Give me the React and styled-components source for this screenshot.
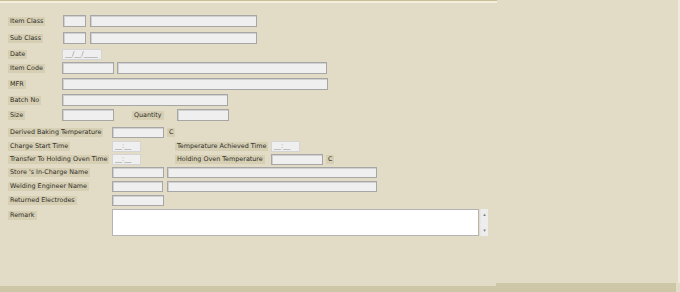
import React from "react";
import styled, { createGlobalStyle } from "styled-components";

const GlobalStyle = createGlobalStyle`
  html, body {
    margin: 0;
    padding: 0;
    background: #e2dcc6;
  }
  * {
    box-sizing: border-box;
  }
`;

const Page = styled.div`
  width: 680px;
  height: 292px;
  display: flex;
  flex-direction: column;
  background: #e2dcc6;
  font-family: "DejaVu Sans", sans-serif;
  font-size: 6.4px;
  color: #2f2d29;
  overflow: hidden;
`;

const Main = styled.div`
  flex: 1;
  display: flex;
`;

const Panel = styled.div`
  width: 497px;
  border-top: 1px solid #cabe98;
`;

const RightFill = styled.div`
  flex: 1;
  border-right: 2px solid #eeeadc;
`;

const Form = styled.div`
  display: flex;
  flex-direction: column;
  border-top: 2px solid #f4efdc;
  padding: 12px 0 0 8px;
`;

const Row = styled.div`
  display: flex;
  align-items: ${(p) => (p.$top ? "flex-start" : "center")};
  height: ${(p) => p.$h || 12}px;
  margin-top: ${(p) => p.$mt || 0}px;
`;

const LabelCell = styled.div`
  width: ${(p) => p.$w}px;
  flex-shrink: 0;
  display: flex;
  padding-top: ${(p) => p.$pt || 0}px;
`;

const Label = styled.span`
  display: inline-block;
  background: #d6cfb3;
  padding: 1px 2px;
  line-height: 7px;
  white-space: nowrap;
  margin-left: ${(p) => p.$ml || 0}px;
`;

const Field = styled.input`
  width: ${(p) => p.$w}px;
  height: ${(p) => p.$h || 12}px;
  margin-left: ${(p) => p.$ml || 0}px;
  padding: 0 2px;
  background: #efefef;
  border: 1px solid #a6a6a6;
  box-shadow: inset 1px 1px 0 #d0d0d0;
  outline: none;
  flex-shrink: 0;
`;

// masked date/time box, shown greyed out
const MaskField = styled.div`
  width: ${(p) => p.$w}px;
  height: 11px;
  flex-shrink: 0;
  padding: 0 2px;
  background: #efefef;
  border: 1px solid #d4d4d4;
  font-size: 7px;
  line-height: 8px;
  color: #959595;
  white-space: nowrap;
  overflow: hidden;
`;

const Unit = styled(Label)`
  margin-left: 3px;
`;

const RemarkBox = styled.div`
  display: flex;
`;

const TextArea = styled.textarea`
  width: 367px;
  height: 27px;
  background: #ffffff;
  border: 1px solid #b4b4b4;
  resize: none;
  overflow: hidden;
  padding: 2px;
  outline: none;
`;

const ScrollBar = styled.div`
  width: 8px;
  height: 27px;
  margin-left: 1px;
  background: #ededed;
  border-left: 1px dotted #e0e0e0;
  display: flex;
  flex-direction: column;
  justify-content: space-between;
  align-items: center;
  padding: 3px 0;
  font-size: 5px;
  line-height: 5px;
  color: #808080;
`;

const Footer = styled.div`
  height: 9px;
  display: flex;
  align-items: flex-end;
`;

const FooterBar = styled.div`
  width: ${(p) => p.$w}px;
  height: ${(p) => p.$h}px;
  background: #cdc6a7;
`;

export default function App() {
  return (
    <>
      <GlobalStyle />
      <Page>
        <Main>
          <Panel>
            <Form>
              <Row>
                <LabelCell $w={55}><Label>Item Class</Label></LabelCell>
                <Field $w={23} readOnly />
                <Field $w={167} $ml={4} readOnly />
              </Row>
              <Row $mt={5}>
                <LabelCell $w={55}><Label>Sub Class</Label></LabelCell>
                <Field $w={23} readOnly />
                <Field $w={167} $ml={4} readOnly />
              </Row>
              <Row $mt={5} $h={11}>
                <LabelCell $w={54}><Label>Date</Label></LabelCell>
                <MaskField $w={40}>__/__/____</MaskField>
              </Row>
              <Row $mt={2}>
                <LabelCell $w={54}><Label>Item Code</Label></LabelCell>
                <Field $w={52} readOnly />
                <Field $w={210} $ml={3} readOnly />
              </Row>
              <Row $mt={4}>
                <LabelCell $w={54}><Label>MFR</Label></LabelCell>
                <Field $w={266} readOnly />
              </Row>
              <Row $mt={4}>
                <LabelCell $w={54}><Label>Batch No</Label></LabelCell>
                <Field $w={166} readOnly />
              </Row>
              <Row $mt={3}>
                <LabelCell $w={54}><Label>Size</Label></LabelCell>
                <Field $w={52} readOnly />
                <LabelCell $w={63}><Label $ml={18}>Quantity</Label></LabelCell>
                <Field $w={52} readOnly />
              </Row>
              <Row $mt={6} $h={11}>
                <LabelCell $w={104}><Label>Derived Baking Temperature</Label></LabelCell>
                <Field $w={52} $h={11} readOnly />
                <Unit>C</Unit>
              </Row>
              <Row $mt={3} $h={11}>
                <LabelCell $w={104}><Label>Charge Start Time</Label></LabelCell>
                <MaskField $w={29}>__:__</MaskField>
                <LabelCell $w={130}><Label $ml={34}>Temperature Achieved Time</Label></LabelCell>
                <MaskField $w={29}>__:__</MaskField>
              </Row>
              <Row $mt={2} $h={11}>
                <LabelCell $w={104}><Label>Transfer To Holding Oven Time</Label></LabelCell>
                <MaskField $w={29}>__:__</MaskField>
                <LabelCell $w={130}><Label $ml={34}>Holding Oven Temperature</Label></LabelCell>
                <Field $w={52} $h={11} readOnly />
                <Unit>C</Unit>
              </Row>
              <Row $mt={2} $h={11}>
                <LabelCell $w={104}><Label>Store 's In-Charge Name</Label></LabelCell>
                <Field $w={52} $h={11} readOnly />
                <Field $w={210} $h={11} $ml={3} readOnly />
              </Row>
              <Row $mt={3} $h={11}>
                <LabelCell $w={104}><Label>Welding Engineer Name</Label></LabelCell>
                <Field $w={51} $h={11} readOnly />
                <Field $w={210} $h={11} $ml={4} readOnly />
              </Row>
              <Row $mt={3} $h={11}>
                <LabelCell $w={104}><Label>Returned Electrodes</Label></LabelCell>
                <Field $w={52} $h={11} readOnly />
              </Row>
              <Row $mt={3} $h={27} $top>
                <LabelCell $w={104} $pt={2}><Label>Remark</Label></LabelCell>
                <RemarkBox>
                  <TextArea readOnly />
                  <ScrollBar>
                    <span>▴</span>
                    <span>▾</span>
                  </ScrollBar>
                </RemarkBox>
              </Row>
            </Form>
          </Panel>
          <RightFill />
        </Main>
        <Footer>
          <FooterBar $w={496} $h={6} />
          <FooterBar $w={180} $h={9} />
        </Footer>
      </Page>
    </>
  );
}
